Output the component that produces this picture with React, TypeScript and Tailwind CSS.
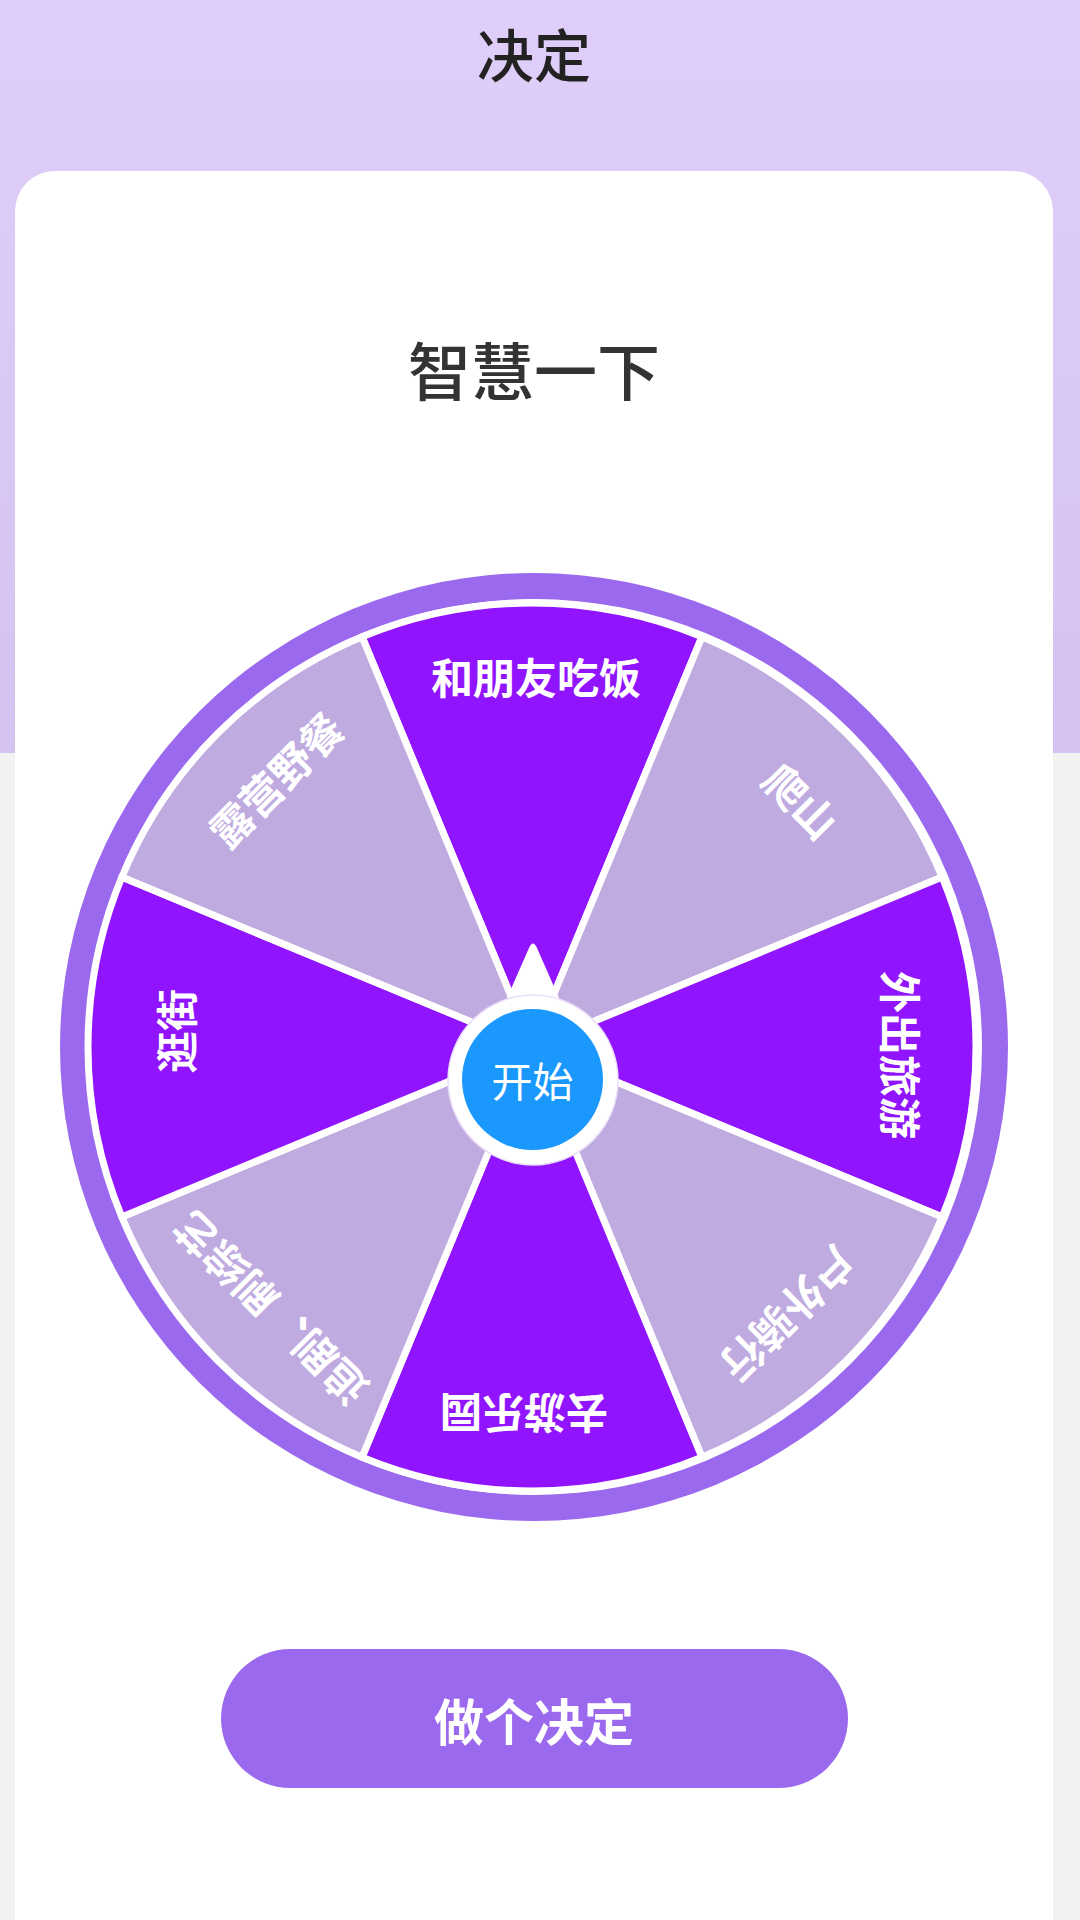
import React from "react";

type Prize = { name: string; r?: number };

const prizes: Prize[] = [
  { name: "和朋友吃饭" },
  { name: "爬山", r: 366 },
  { name: "外出旅游", r: 370 },
  { name: "户外骑行" },
  { name: "去游乐园", r: 368 },
  { name: "追剧、刷综艺" },
  { name: "逛街", r: 358 },
  { name: "露营野餐" },
];

const SIZE = 960;
const CX = 478; // sectors sit a touch left of the ring
const CY = 480;
const R = 444;

// point on the circle, angle in degrees, 0 = up, clockwise
const pt = (deg: number, r: number) => {
  const a = ((deg - 90) * Math.PI) / 180;
  return [CX + r * Math.cos(a), CY + r * Math.sin(a)];
};

const sectorPath = (i: number) => {
  const [x1, y1] = pt(i * 45 - 22.5, R);
  const [x2, y2] = pt(i * 45 + 22.5, R);
  return `M ${CX} ${CY} L ${x1} ${y1} A ${R} ${R} 0 0 1 ${x2} ${y2} Z`;
};

const Wheel: React.FC = () => {
  return (
    <div className="relative w-[960px] h-[960px] mt-[168px]">
      <svg width={SIZE} height={SIZE} viewBox={`0 0 ${SIZE} ${SIZE}`} className="block">
        {/* outer ring */}
        <circle cx={480} cy={480} r={474} fill="#9b69ee" />
        <circle cx={480} cy={480} r={448} fill="#ffffff" />

        {prizes.map((p, i) => (
          <path
            key={p.name}
            d={sectorPath(i)}
            fill={i % 2 === 0 ? "#9114fe" : "#c0abe1"}
            stroke="#ffffff"
            strokeWidth={7}
            strokeLinejoin="round"
          />
        ))}

        {prizes.map((p, i) => {
          const n = Array.from(p.name).length;
          const dx = (6 - n) * 4;
          return (
            <g key={`t-${p.name}`} transform={`rotate(${i * 45} ${CX} ${CY})`}>
              <text
                x={CX + dx}
                y={CY - (p.r ?? 372)}
                textAnchor="middle"
                dominantBaseline="central"
                fill="#ffffff"
                fontSize={42}
                fontWeight={700}
                fontFamily='"Noto Sans CJK SC", "Noto Sans", sans-serif'
              >
                {p.name}
              </text>
            </g>
          );
        })}

        {/* pointer */}
        <path d="M 446 447 L 475 381 Q 479 372 483 381 L 512 447 Z" fill="#ffffff" />
        <circle cx={479} cy={513} r={85} fill="#ffffff" stroke="#eadff8" strokeWidth={1.5} />
      </svg>

      <button className="absolute left-[408px] top-[442px] w-[141px] h-[141px] rounded-full bg-[#1b98fe] flex items-center justify-center text-white text-[41px] leading-none font-['Noto_Sans_CJK_SC',sans-serif]">
        开始
      </button>
    </div>
  );
};

export default function App() {
  return (
    <div className="w-[1080px] h-[1920px] overflow-hidden bg-[linear-gradient(180deg,#dfcefa_0px,#d5c2f0_753px,#f2f2f2_753px)] font-['Noto_Sans_CJK_SC',sans-serif]">
      <div className="ml-[15px] w-[1038px]">
        <div className="h-[104px] flex items-center justify-center">
          <h1 className="text-[57px] leading-none text-[#222222] font-medium">决定</h1>
        </div>

        <div className="mt-[67px] h-[1820px] bg-white rounded-[40px] flex flex-col items-center">
          <h2 className="mt-[165px] text-[63px] leading-[63px] text-[#333333] font-medium">智慧一下</h2>

          <Wheel />

          <button className="mt-[122px] w-[627px] h-[139px] rounded-full bg-[#9b69ee] text-white text-[50px] font-bold leading-none flex items-center justify-center">
            做个决定
          </button>
        </div>
      </div>
    </div>
  );
}
